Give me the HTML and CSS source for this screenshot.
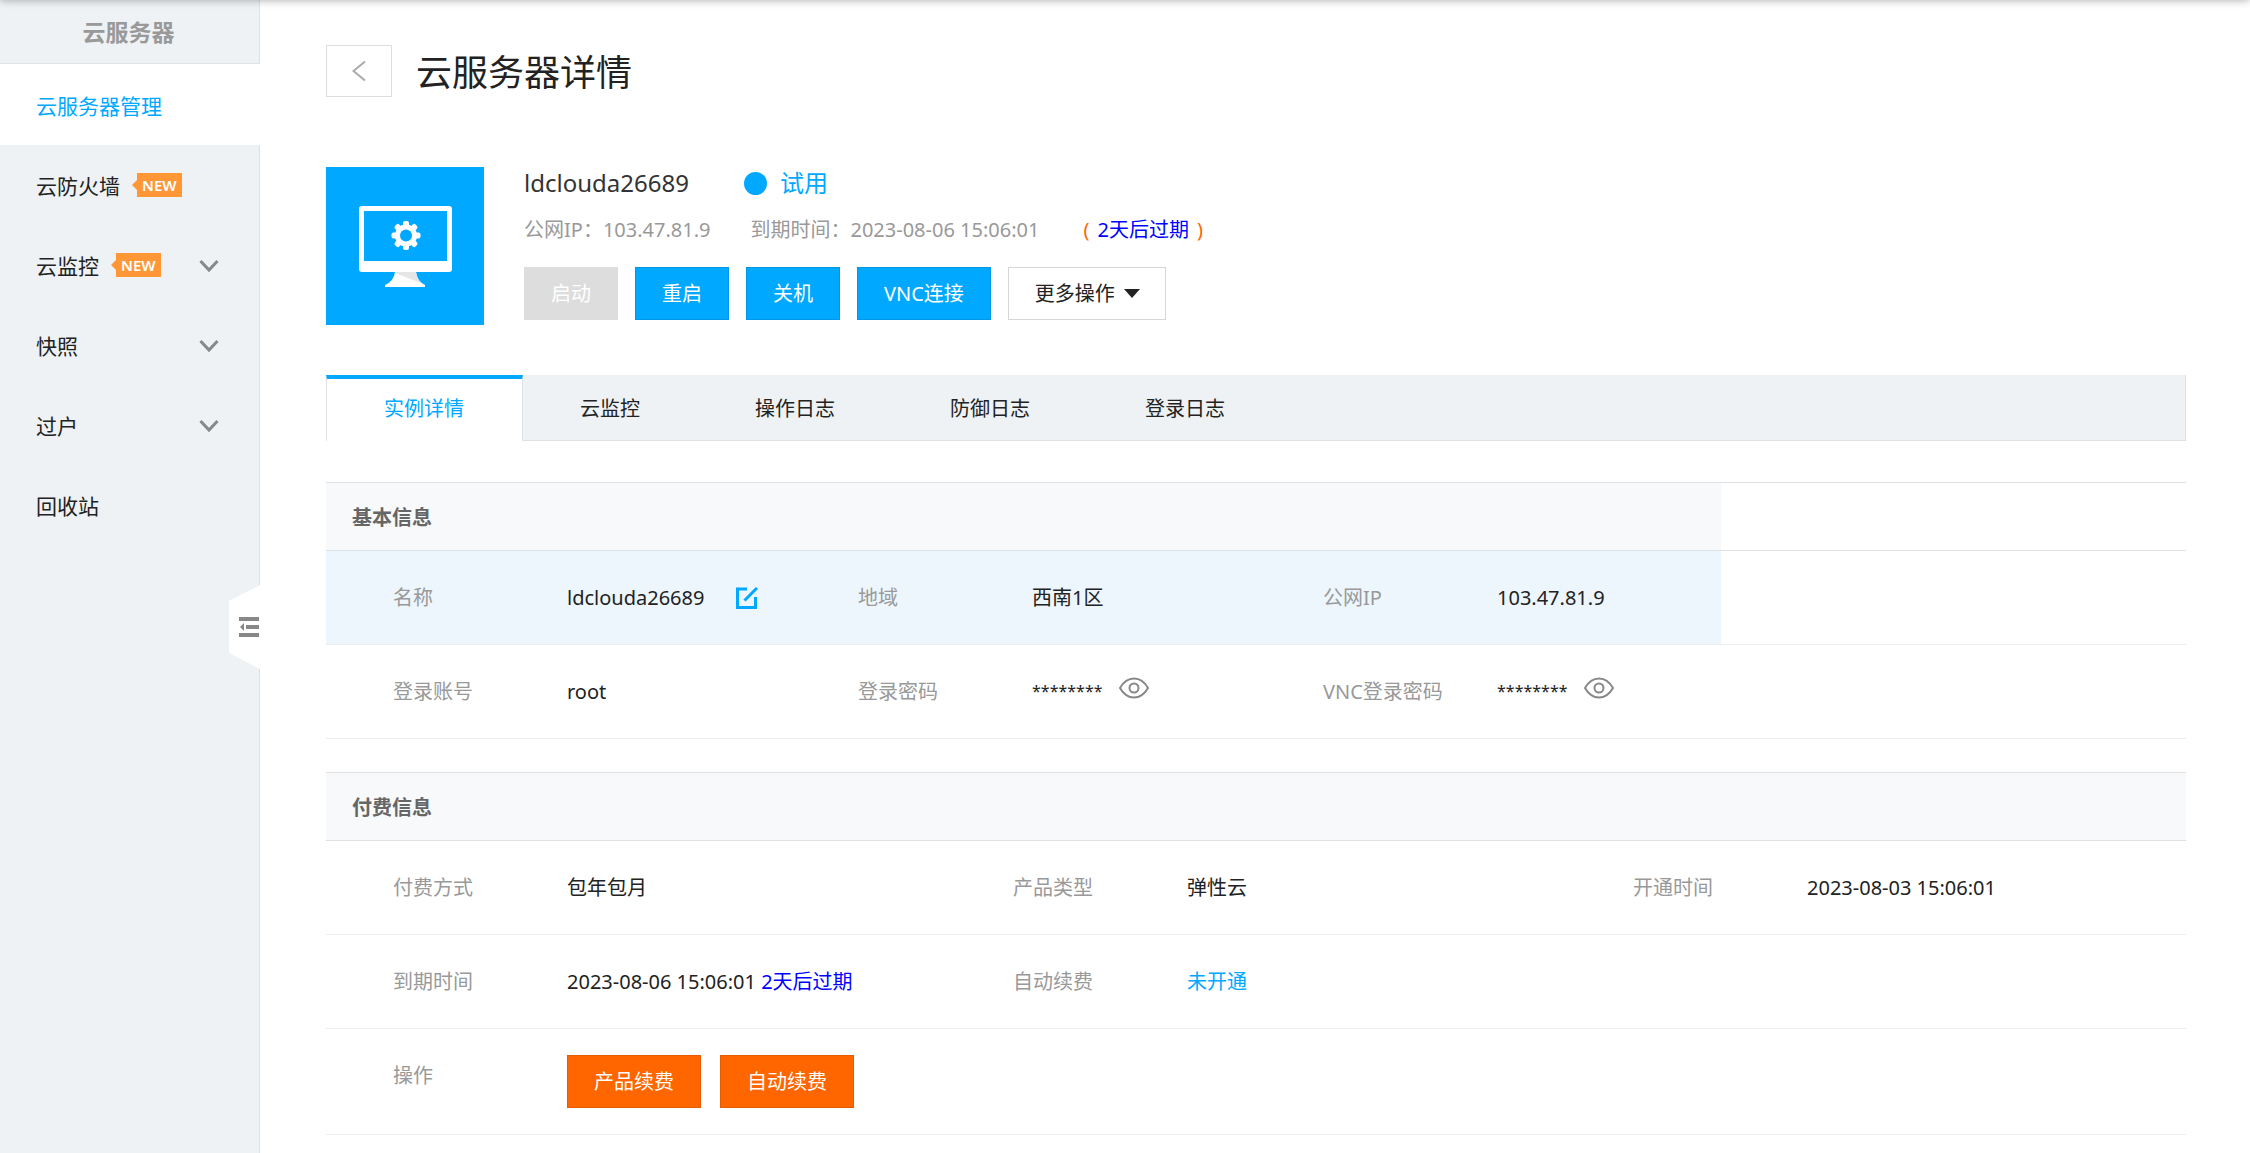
FILE: index.html
```html
<!DOCTYPE html>
<html lang="zh-CN">
<head>
    <meta charset="UTF-8">
    <meta name="viewport" content="width=device-width, initial-scale=1.0">
    <title>云服务器详情</title>
    <link rel="stylesheet" href="styles.css">
</head>
<body>
    <div class="top-shadow"></div>

    <!-- Sidebar -->
    <aside class="sidebar">
        <div class="sidebar-title">云服务器</div>
        <nav class="menu">
            <a class="menu-item active" href="#">云服务器管理</a>
            <a class="menu-item" href="#">云防火墙<span class="badge">NEW</span></a>
            <a class="menu-item" href="#">云监控<span class="badge">NEW</span>
                <svg class="chevron" viewBox="0 0 20 14"><path d="M1.5 2 L10 11 L18.5 2"/></svg>
            </a>
            <a class="menu-item" href="#">快照
                <svg class="chevron" viewBox="0 0 20 14"><path d="M1.5 2 L10 11 L18.5 2"/></svg>
            </a>
            <a class="menu-item" href="#">过户
                <svg class="chevron" viewBox="0 0 20 14"><path d="M1.5 2 L10 11 L18.5 2"/></svg>
            </a>
            <a class="menu-item" href="#">回收站</a>
        </nav>
        <button type="button" class="collapse-btn" aria-label="收起菜单">
            <svg width="31" height="84" viewBox="0 0 31 84">
                <path d="M31 0 L0 16 V68 L31 84 Z" fill="#fff"/>
                <g fill="#888">
                    <rect x="10" y="32" width="20" height="4"/>
                    <rect x="17" y="40" width="13" height="4"/>
                    <rect x="10" y="48" width="20" height="4"/>
                    <path d="M11 42 L15 38 V46 Z"/>
                </g>
            </svg>
        </button>
    </aside>

    <main class="content">
        <div class="page-head">
            <a class="back-btn" href="#" aria-label="返回">
                <svg width="14" height="22" viewBox="0 0 14 22"><path d="M13 1.500 L1.500 11 L13 20.500" fill="none" stroke="#aaa" stroke-width="2"/></svg>
            </a>
            <h1>云服务器详情</h1>
        </div>

        <!-- Server summary -->
        <section class="summary">
            <div class="server-icon">
                <svg viewBox="0 0 158 158">
                    <path d="M69 105 H90 Q91 114 99 118 V120 H59 V118 Q68 114 69 105 Z" fill="#fff"/>
                    <path d="M69 105 H90 Q91 112 95 116 L69 106 Z" fill="#e6e6e6"/>
                    <rect x="33" y="39" width="93" height="66" rx="3" fill="#fff"/>
                    <rect x="38" y="44" width="83" height="50" fill="#00a8ff"/>
                    <g fill="#fff">
                        <rect x="77" y="54" width="6" height="29" rx="2"/>
                        <rect x="77" y="54" width="6" height="29" rx="2" transform="rotate(45 80 68.500)"/>
                        <rect x="77" y="54" width="6" height="29" rx="2" transform="rotate(90 80 68.500)"/>
                        <rect x="77" y="54" width="6" height="29" rx="2" transform="rotate(135 80 68.500)"/>
                        <circle cx="80" cy="68.500" r="11"/>
                    </g>
                    <circle cx="80" cy="68.500" r="6" fill="#00a8ff"/>
                </svg>
            </div>
            <div class="summary-info">
                <div class="name-row">
                    <span class="server-name">ldclouda26689</span>
                    <span class="status"><i class="dot"></i>试用</span>
                </div>
                <div class="meta-row">
                    <span>公网IP：103.47.81.9</span>
                    <span>到期时间：2023-08-06 15:06:01</span>
                    <span class="paren">(<span class="expire">2天后过期</span>)</span>
                </div>
                <div class="btn-row">
                    <button type="button" class="btn btn-disabled" disabled>启动</button>
                    <button type="button" class="btn btn-blue">重启</button>
                    <button type="button" class="btn btn-blue">关机</button>
                    <button type="button" class="btn btn-blue">VNC连接</button>
                    <button type="button" class="btn btn-more">更多操作<span class="caret"></span></button>
                </div>
            </div>
        </section>

        <!-- Tabs -->
        <nav class="tabs">
            <a class="tab active" href="#">实例详情</a>
            <a class="tab" href="#">云监控</a>
            <a class="tab" href="#">操作日志</a>
            <a class="tab" href="#">防御日志</a>
            <a class="tab" href="#">登录日志</a>
        </nav>

        <!-- Basic info -->
        <table class="info">
            <colgroup>
                <col class="col-label"><col>
                <col class="col-label"><col>
                <col class="col-label"><col>
                <col class="col-label"><col>
            </colgroup>
            <thead>
                <tr><th colspan="6">基本信息</th><td colspan="2"></td></tr>
            </thead>
            <tbody>
                <tr class="hover">
                    <td class="label">名称</td>
                    <td>
                        <div class="cell">ldclouda26689
                            <button type="button" class="icon-btn edit-btn" aria-label="修改名称">
                                <svg width="22" height="22" viewBox="0 0 22 22" fill="none" stroke="#00a8ff">
                                    <path d="M11 2 H1.500 V20.500 H19.500 V10" stroke-width="3"/>
                                    <path d="M8.500 13.500 L21 1" stroke-width="3"/>
                                </svg>
                            </button>
                        </div>
                    </td>
                    <td class="label">地域</td>
                    <td>西南1区</td>
                    <td class="label">公网IP</td>
                    <td>103.47.81.9</td>
                    <td class="blank" colspan="2"></td>
                </tr>
                <tr>
                    <td class="label">登录账号</td>
                    <td>root</td>
                    <td class="label">登录密码</td>
                    <td>
                        <div class="cell"><span class="stars">********</span>
                            <button type="button" class="icon-btn eye-btn" aria-label="显示密码">
                                <svg width="30" height="22" viewBox="0 0 30 22" fill="none" stroke="#888" stroke-width="2">
                                    <path d="M1 11 C5 4 10 1.500 15 1.500 S25 4 29 11 C25 18 20 20.500 15 20.500 S5 18 1 11 Z"/>
                                    <circle cx="15" cy="11" r="4.500"/>
                                </svg>
                            </button>
                        </div>
                    </td>
                    <td class="label">VNC登录密码</td>
                    <td>
                        <div class="cell"><span class="stars">********</span>
                            <button type="button" class="icon-btn eye-btn" aria-label="显示VNC密码">
                                <svg width="30" height="22" viewBox="0 0 30 22" fill="none" stroke="#888" stroke-width="2">
                                    <path d="M1 11 C5 4 10 1.500 15 1.500 S25 4 29 11 C25 18 20 20.500 15 20.500 S5 18 1 11 Z"/>
                                    <circle cx="15" cy="11" r="4.500"/>
                                </svg>
                            </button>
                        </div>
                    </td>
                    <td colspan="2"></td>
                </tr>
            </tbody>
        </table>

        <!-- Payment info -->
        <table class="info">
            <colgroup>
                <col class="col-label"><col>
                <col class="col-label"><col>
                <col class="col-label"><col>
            </colgroup>
            <thead>
                <tr><th colspan="6">付费信息</th></tr>
            </thead>
            <tbody>
                <tr>
                    <td class="label">付费方式</td>
                    <td>包年包月</td>
                    <td class="label">产品类型</td>
                    <td>弹性云</td>
                    <td class="label">开通时间</td>
                    <td>2023-08-03 15:06:01</td>
                </tr>
                <tr>
                    <td class="label">到期时间</td>
                    <td>2023-08-06 15:06:01 <span class="expire">2天后过期</span></td>
                    <td class="label">自动续费</td>
                    <td><a class="link" href="#">未开通</a></td>
                    <td colspan="2"></td>
                </tr>
                <tr>
                    <td class="label">操作</td>
                    <td class="actions" colspan="5">
                        <div class="action-row">
                            <button type="button" class="btn btn-orange">产品续费</button>
                            <button type="button" class="btn btn-orange">自动续费</button>
                        </div>
                    </td>
                </tr>
            </tbody>
        </table>
    </main>
</body>
</html>
```
FILE: styles.css
```css
* {
    box-sizing: border-box;
}

body {
    margin: 0;
    display: flex;
    min-height: 100vh;
    background: #fff;
    color: #222;
    font-family: "Noto Sans", "Noto Sans CJK SC", sans-serif;
    font-size: 20px;
    line-height: 27px;
}

a {
    color: inherit;
    text-decoration: none;
}

button {
    font: inherit;
    cursor: pointer;
}

/* Shadow under the site header */
.top-shadow {
    position: absolute;
    top: -10px;
    left: 0;
    right: 0;
    height: 10px;
    box-shadow: 0 0 8px rgba(0, 0, 0, 0.35);
    z-index: 5;
}

/* Sidebar */
.sidebar {
    position: relative;
    flex: none;
    width: 260px;
    background: #eef2f5;
    border-right: 1px solid #dfe2e5;
}

.sidebar-title {
    height: 64px;
    padding-right: 2px;
    border-bottom: 1px solid #dfe2e5;
    color: #999;
    font-size: 23px;
    font-weight: bold;
    line-height: 64px;
    text-align: center;
}

.menu-item {
    display: flex;
    align-items: center;
    height: 80px;
    padding: 2px 40px 0 36px;
    font-size: 21px;
}

.menu-item.active {
    height: 81px;
    padding-top: 4px;
    margin-right: -1px;
    background: #fff;
    color: #00a8ff;
}

.badge {
    position: relative;
    height: 24px;
    margin: 0 0 2px 17px;
    padding: 0 5px;
    background: #ff9737;
    color: #fff;
    font-size: 15px;
    font-weight: 600;
    line-height: 24px;
}

.badge::before {
    content: "";
    position: absolute;
    left: -5px;
    top: 7px;
    border: 5px solid transparent;
    border-left: 0;
    border-right-color: #ff9737;
}

.chevron {
    width: 20px;
    height: 14px;
    margin-left: auto;
    fill: none;
    stroke: #888;
    stroke-width: 3;
}

.collapse-btn {
    position: absolute;
    top: 585px;
    right: -1px;
    padding: 0;
    border: 0;
    background: none;
    line-height: 0;
}

/* Content */
.content {
    flex: 1;
    min-width: 0;
    padding: 45px 64px 19px 66px;
}

.page-head {
    display: flex;
    align-items: center;
    gap: 24px;
    margin-bottom: 70px;
}

.back-btn {
    display: flex;
    align-items: center;
    justify-content: center;
    width: 66px;
    height: 52px;
    border: 1px solid #ddd;
}

h1 {
    margin: 0;
    padding-top: 4px;
    font-size: 36px;
    font-weight: 400;
    line-height: 48px;
}

/* Server summary */
.summary {
    display: flex;
    gap: 40px;
    margin-bottom: 50px;
}

.server-icon {
    flex: none;
    width: 158px;
    height: 158px;
    background: #00a8ff;
}

.summary-info {
    display: flex;
    flex-direction: column;
}

.name-row {
    display: flex;
    gap: 55px;
    height: 32px;
    font-size: 24px;
    line-height: 32px;
}

.server-name {
    color: #333;
}

.status {
    display: flex;
    align-items: center;
    gap: 13px;
    color: #00a8ff;
}

.dot {
    width: 23px;
    height: 23px;
    border-radius: 50%;
    background: #00a8ff;
}

.meta-row {
    display: flex;
    gap: 40px;
    margin: 17px 0 24px;
    color: #999;
}

.paren {
    margin-left: 4px;
    color: #ff6600;
}

.expire {
    color: #0000ff;
}

.paren .expire {
    margin: 0 8px;
}

.btn-row {
    display: flex;
    gap: 17px;
}

.btn {
    height: 53px;
    padding: 0 26px;
    border: 1px solid;
    color: #fff;
}

.btn-disabled {
    background: #ddd;
    border-color: #ddd;
    cursor: default;
}

.btn-blue {
    background: #00a8ff;
    border-color: #0098e6;
}

.btn-orange {
    background: #ff6600;
    border-color: #e65c00;
}

.btn-more {
    display: flex;
    align-items: center;
    gap: 9px;
    padding-right: 25px;
    background: #fff;
    border-color: #d5d7d8;
    color: #222;
}

.caret {
    border: 8px solid transparent;
    border-top: 9px solid #222;
    border-bottom: 0;
}

/* Tabs */
.tabs {
    display: flex;
    height: 66px;
    margin-bottom: 41px;
    background: #eef2f5;
    border-bottom: 1px solid #dfe2e5;
    border-right: 1px solid #dfe2e5;
}

.tab {
    padding: 0 57px;
    border-right: 1px solid transparent;
    line-height: 67px;
}

.tab.active {
    height: 66px;
    padding: 0 58px 0 57px;
    background: #fff;
    border: 1px solid #dfe2e5;
    border-top: 4px solid #00a8ff;
    border-bottom: 0;
    color: #00a8ff;
    line-height: 59px;
}

/* Info tables */
.info {
    width: 100%;
    margin-bottom: 33px;
    border-collapse: separate;
    border-spacing: 0;
    table-layout: fixed;
}

.col-label {
    width: 241px;
}

.info th,
.info thead td {
    height: 69px;
    padding: 1px 26px 0;
    border-top: 1px solid #dfe2e5;
    border-bottom: 1px solid #dfe2e5;
    text-align: left;
}

.info th {
    background: #f7f9fb;
    color: #666;
    font-weight: bold;
}

.info tbody td {
    padding: 33px 0;
    border-bottom: 1px solid #ebedee;
    vertical-align: top;
    white-space: nowrap;
}

.info tbody td.label {
    padding-left: 67px;
    color: #999;
}

.hover td {
    background: #edf6fd;
}

.hover td.blank {
    background: #fff;
}

.cell {
    display: flex;
    align-items: center;
    height: 27px;
}

.stars {
    font-size: 16px;
}

.icon-btn {
    padding: 0;
    border: 0;
    background: none;
    line-height: 0;
}

.edit-btn {
    margin-left: 32px;
}

.eye-btn {
    margin: 0 0 8px 16px;
}

.info tbody td.actions {
    padding: 26px 0;
}

.action-row {
    display: flex;
    gap: 19px;
}

.link {
    color: #00a8ff;
}
```
